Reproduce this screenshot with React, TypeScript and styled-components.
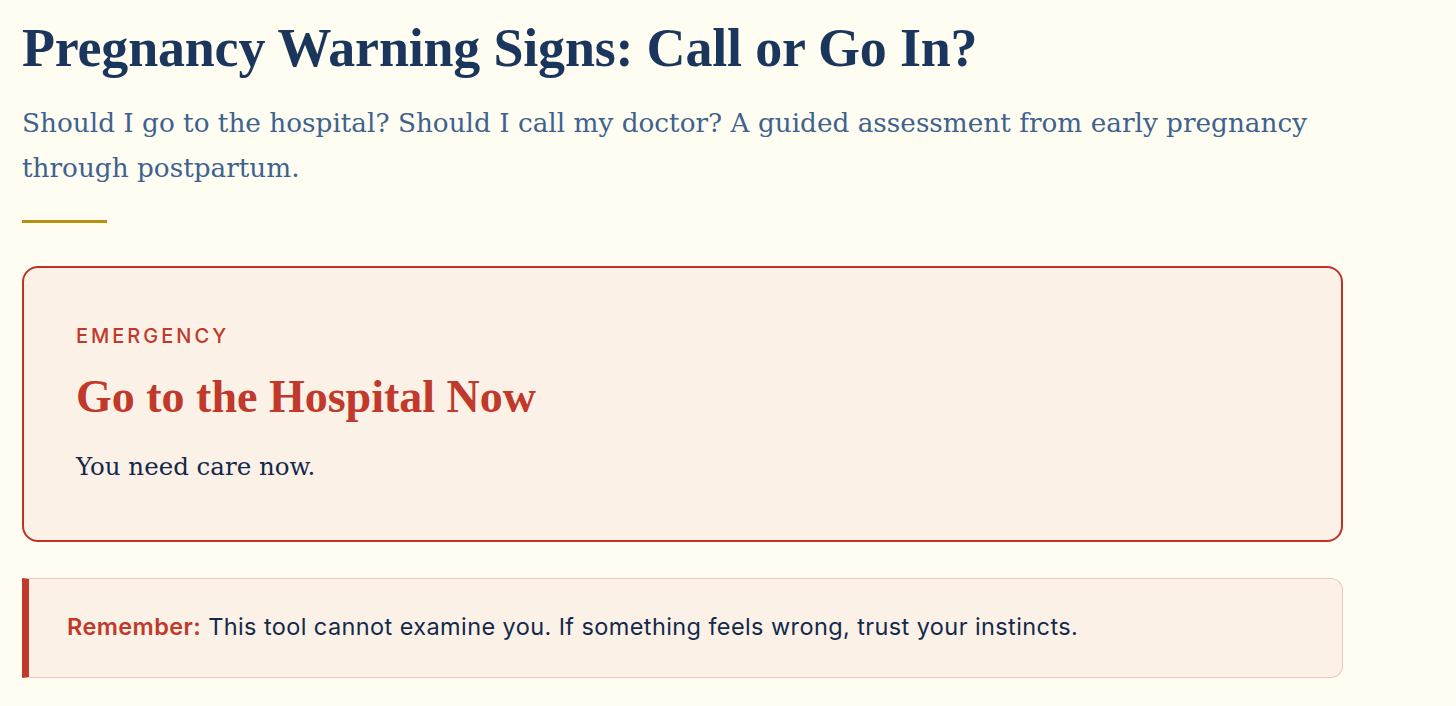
import React from "react";
import styled, { createGlobalStyle } from "styled-components";

const GlobalStyle = createGlobalStyle`
  html, body { margin: 0; padding: 0; background: #fffdf1; }
  body { font-family: "Liberation Serif", serif; }
`;

const Page = styled.main`
  width: 1321px;
  padding: 18px 22px 0 22px;
  display: flex;
  flex-direction: column;
`;

const Title = styled.h1`
  margin: 0;
  font-family: "Liberation Serif", serif;
  font-weight: 700;
  font-size: 54px;
  line-height: 60px;
  letter-spacing: -0.2px;
  color: #1b365d;
`;

const Subtitle = styled.p`
  margin: 23px 0 0 0;
  font-family: "DejaVu Serif", serif;
  font-size: 26.3px;
  line-height: 45px;
  color: #3e6290;
`;

const Rule = styled.div`
  width: 85px;
  height: 3px;
  background: #b8900f;
  margin-top: 29px;
`;

const AlertCard = styled.section`
  margin-top: 43px;
  border: 2px solid #bf3326;
  border-radius: 16px;
  background: #fbf1e7;
  padding: 57px 52px 58px 52px;
  display: flex;
  flex-direction: column;
`;

const Label = styled.div`
  font-family: "Inter", sans-serif;
  font-weight: 500;
  font-size: 20px;
  letter-spacing: 3px;
  color: #c0392b;
  line-height: 22px;
`;

const CardTitle = styled.h2`
  margin: 23px 0 0 0;
  font-family: "Liberation Serif", serif;
  font-weight: 700;
  font-size: 46px;
  line-height: 54px;
  color: #c0392b;
`;

const CardText = styled.p`
  margin: 28px 0 0 0;
  font-family: "DejaVu Serif", serif;
  font-size: 24.5px;
  line-height: 30px;
  color: #13294b;
`;

const Note = styled.aside`
  margin-top: 36px;
  border: 1px solid #f2c6b8;
  border-left: 7px solid #c0392b;
  border-radius: 0 12px 12px 0;
  background: #fbf1e7;
  padding: 34px 40px 36px 38px;
  font-family: "Inter", sans-serif;
  font-size: 23.5px;
  line-height: 28px;
  letter-spacing: 0.4px;
  color: #13294b;
`;

const Strong = styled.strong`
  color: #c0392b;
  font-weight: 600;
`;

export default function App() {
  return (
    <>
      <GlobalStyle />
      <Page>
        <Title>Pregnancy Warning Signs: Call or Go In?</Title>
        <Subtitle>
          Should I go to the hospital? Should I call my doctor? A guided assessment from early pregnancy through postpartum.
        </Subtitle>
        <Rule />
        <AlertCard>
          <Label>EMERGENCY</Label>
          <CardTitle>Go to the Hospital Now</CardTitle>
          <CardText>You need care now.</CardText>
        </AlertCard>
        <Note>
          <Strong>Remember:</Strong> This tool cannot examine you. If something feels wrong, trust your instincts.
        </Note>
      </Page>
    </>
  );
}
